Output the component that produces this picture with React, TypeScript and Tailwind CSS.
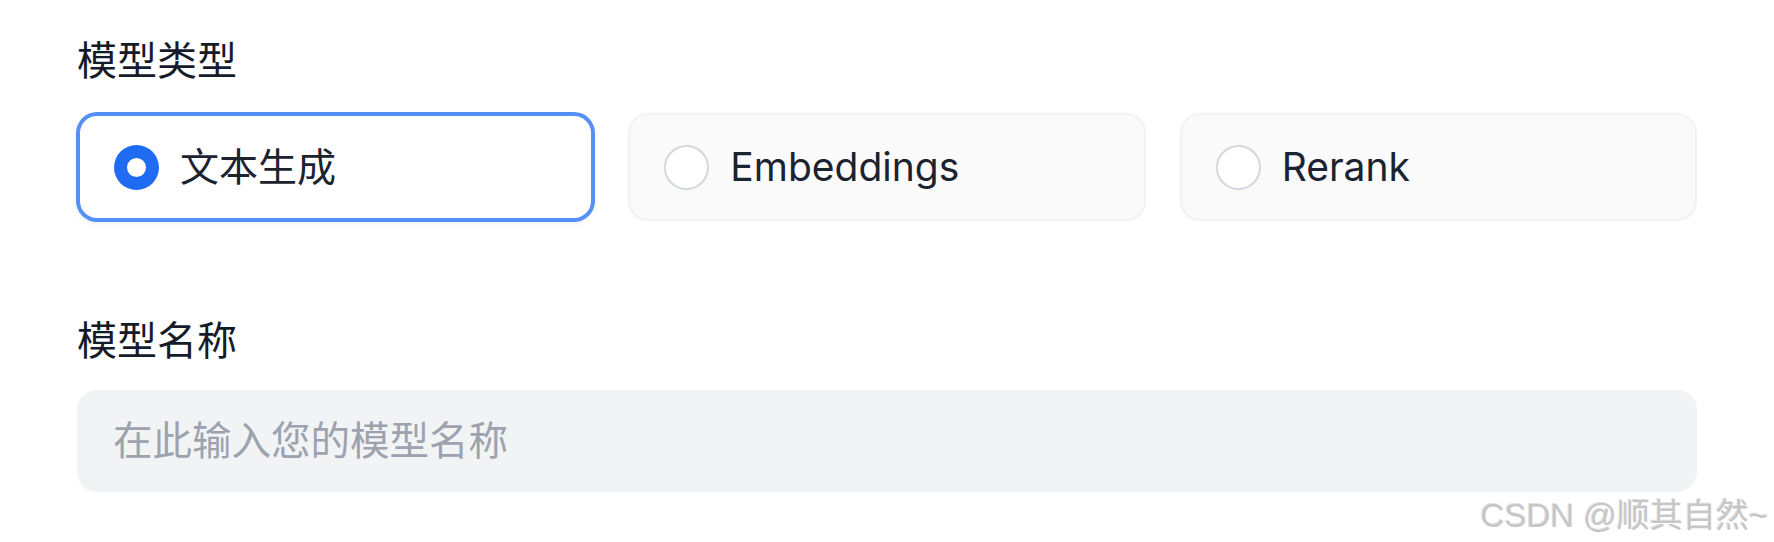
import { useState } from 'react'

const types = [
  { id: 'text', label: '文本生成' },
  { id: 'embeddings', label: 'Embeddings' },
  { id: 'rerank', label: 'Rerank' },
]

export default function App() {
  const [selected, setSelected] = useState('text')

  return (
    <div
      className="relative w-[1774px] h-[542px] bg-white px-[77px] pt-[39px] overflow-hidden"
      style={{ fontFamily: 'Inter, "Noto Sans CJK SC", sans-serif' }}
    >
      {/* Model type */}
      <div className="text-[40px] leading-[44px] text-[#141b29]">模型类型</div>
      <div className="grid grid-cols-3 gap-[34px] mt-[30px]">
        {types.map((t) => {
          const active = selected === t.id
          return (
            <button
              key={t.id}
              onClick={() => setSelected(t.id)}
              className={`h-[108px] flex items-center gap-[21px] px-[34px] rounded-[20px] text-left ${
                active
                  ? 'bg-white border-[3px] border-[#5590f8] shadow-[0_0_0_1px_#5590f8,0_2px_6px_rgba(0,0,0,0.08)]'
                  : 'bg-[#fafafb] border-2 border-[#f1f2f4]'
              }`}
            >
              {active ? (
                <span className="w-[45px] h-[45px] rounded-full bg-[#1f6cf3] flex items-center justify-center shrink-0">
                  <span className="w-[19px] h-[19px] rounded-full bg-white" />
                </span>
              ) : (
                <span className="w-[45px] h-[45px] rounded-full border-[2.5px] border-[#d4d7dd] bg-white shrink-0" />
              )}
              <span className="text-[39px] leading-[44px] text-[#1b2230]">{t.label}</span>
            </button>
          )
        })}
      </div>

      {/* Model name */}
      <div className="text-[40px] leading-[44px] text-[#141b29] mt-[98px]">模型名称</div>
      <input
        placeholder="在此输入您的模型名称"
        className="mt-[27px] w-full h-[102px] rounded-[20px] bg-[#f2f3f5] px-[36px] text-[39.5px] text-gray-900 placeholder:text-[#9ca3af] outline-none"
      />

      {/* watermark */}
      <div
        className="absolute right-[6px] bottom-[10px] text-[33px] leading-none text-[#c6c6c6] [text-shadow:1px_1px_0_#ffffff,-1px_-1px_0_#e0e0e0]"
        style={{ fontFamily: '"Liberation Sans", "Noto Sans CJK SC", sans-serif' }}
      >
        CSDN @顺其自然~
      </div>
    </div>
  )
}
